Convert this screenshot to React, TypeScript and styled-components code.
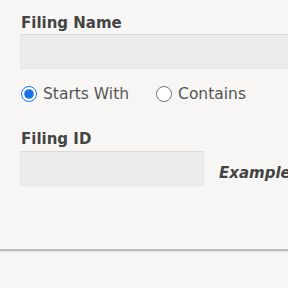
import { createGlobalStyle } from 'styled-components';
import styled from 'styled-components';

const GlobalStyle = createGlobalStyle`
  html, body {
    margin: 0;
    padding: 0;
    background: #f7f6f4;
    overflow: hidden;
  }
  body {
    font-family: "DejaVu Sans", Verdana, sans-serif;
    color: #444;
  }
`;

const App = () => {
  return (
    <>
      <GlobalStyle />
      <Page>
        <Field>
          <Label>Filing Name</Label>
          <WideInput type="text" />
        </Field>
        <RadioRow>
          <RadioLabel>
            <Radio type="radio" name="match" defaultChecked />
            Starts With
          </RadioLabel>
          <RadioLabel>
            <Radio type="radio" name="match" />
            Contains
          </RadioLabel>
        </RadioRow>
        <Field>
          <Label>Filing ID</Label>
          <IdRow>
            <IdInput type="text" />
            <Hint>Example: 123456</Hint>
          </IdRow>
        </Field>
      </Page>
      <Divider />
    </>
  );
};

export default App;

const Page = styled.div`
  width: 400px;
  padding: 13px 0 0 20px;
  height: 237px;
  box-sizing: border-box;
`;

const Field = styled.div`
  display: flex;
  flex-direction: column;
`;

const Label = styled.div`
  font-size: 15px;
  font-weight: bold;
  line-height: 20px;
  margin-left: 1px;
`;

const WideInput = styled.input`
  width: 380px;
  height: 35px;
  box-sizing: border-box;
  margin: 1px 0 0;
  background: #ebebeb;
  border: 1px solid #e6e6e6;
  border-top-color: #dadada;
  outline: none;
`;

const RadioRow = styled.div`
  display: flex;
  gap: 26px;
  margin: 15px 0 25px;
`;

const RadioLabel = styled.label`
  display: flex;
  align-items: center;
  gap: 6px;
  font-size: 15.5px;
  color: #555;
  line-height: 20px;
`;

const Radio = styled.input`
  width: 16px;
  height: 16px;
  margin: 0 0 0 1px;
  accent-color: #1a73e8;
`;

const IdRow = styled.div`
  display: flex;
  align-items: center;
  gap: 15px;
  margin-top: 2px;
`;

const IdInput = styled.input`
  width: 184px;
  height: 35px;
  box-sizing: border-box;
  margin: 0;
  background: #ebebeb;
  border: 1px solid #e6e6e6;
  border-top-color: #dadada;
  outline: none;
`;

const Hint = styled.span`
  font-size: 15px;
  font-weight: bold;
  font-style: italic;
  color: #444;
  white-space: nowrap;
  margin-top: 8px;
`;

const Divider = styled.div`
  height: 2px;
  background: #bdbdbd;
  border-bottom: 1px solid #e2e2e2;
  margin-top: 12px;
`;
